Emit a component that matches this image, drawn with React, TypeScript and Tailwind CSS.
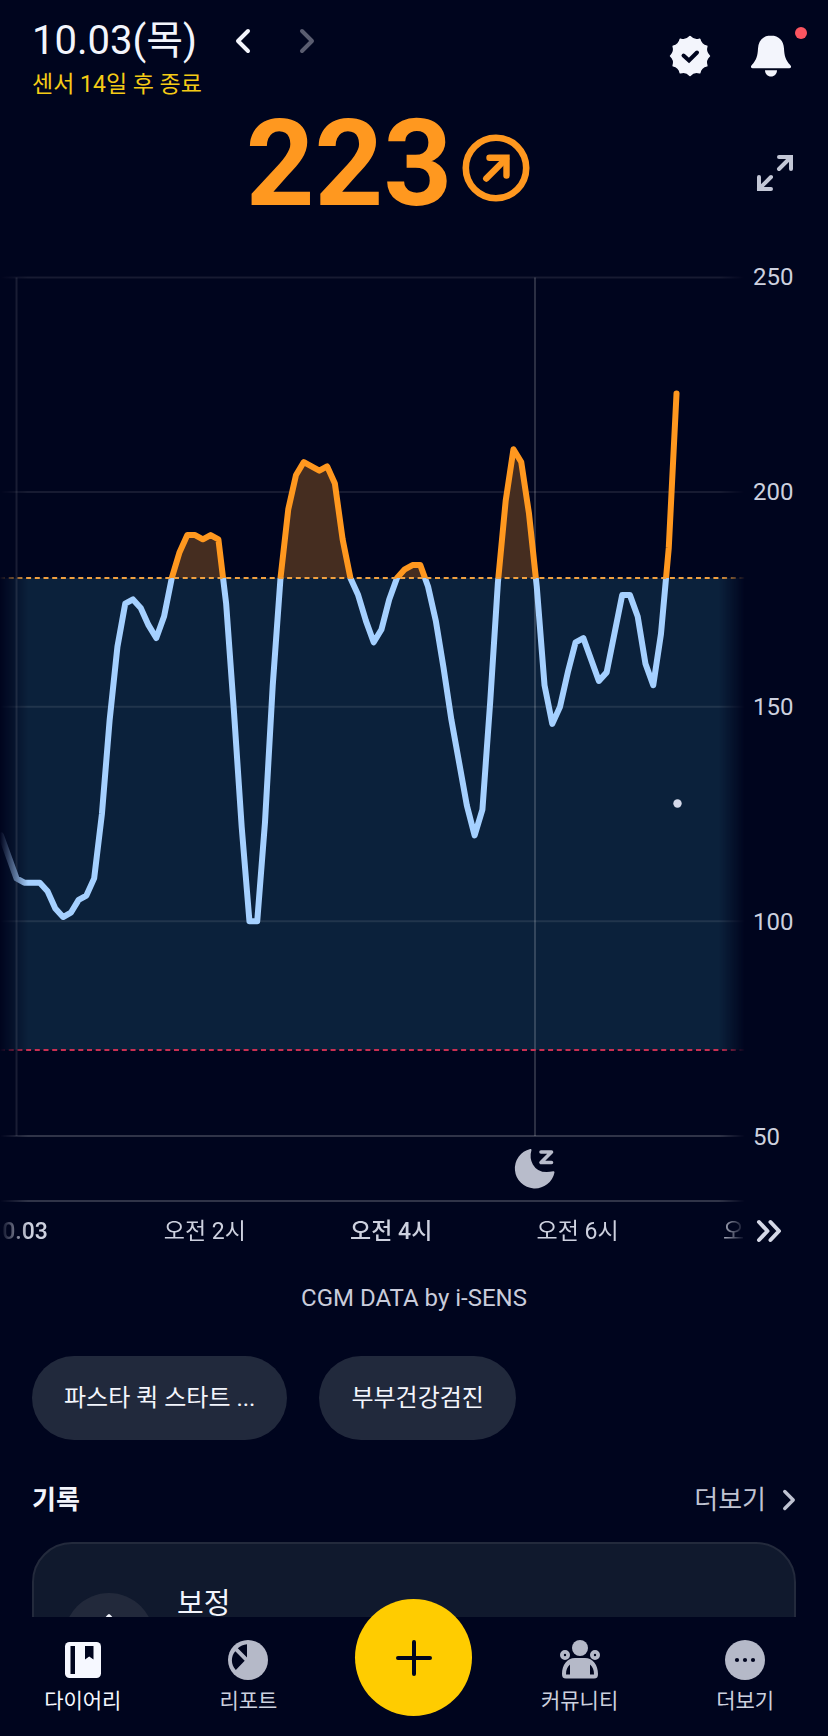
import type { ReactNode } from 'react'
import { clsx } from 'clsx'

// One reading every five minutes, starting at midnight
const READINGS = [
  110, 109, 109, 109, 107, 103, 101, 102, 105, 106, 110, 125, 147, 164, 174, 175, 173, 169, 166, 171, 180, 186, 190,
  190, 189, 190, 189, 174, 149, 122, 100, 100, 123, 155, 180, 196, 204, 207, 206, 205, 206, 202, 189, 180, 176, 170,
  165, 168, 175, 180, 182, 183, 183, 178, 170, 159, 147, 137, 127, 120, 126, 151, 179, 198, 210, 207, 195, 178, 155,
  146, 150, 158, 165, 166, 161, 156, 158, 167, 176, 176, 171, 160, 155, 167, 187, 223,
]

const PLOT_WIDTH = 745
const MIDNIGHT_X = 16.5
const STEP = 7.765
const HIGH = 180
const LOW = 70
const SLEEP_X = 535
const TICKS = [250, 200, 150, 100, 50]

const HOURS = [
  { label: '10.03', hour: 0, strong: true },
  { label: '오전 2시', hour: 2, strong: false },
  { label: '오전 4시', hour: 4, strong: true },
  { label: '오전 6시', hour: 6, strong: false },
  { label: '오전 8시', hour: 8, strong: false },
]

const toX = (index: number) => MIDNIGHT_X + index * STEP
const toY = (value: number) => 10.5 + (250 - value) * 4.292

const linePoints = [`1,${toY(120)}`, ...READINGS.map((v, i) => `${toX(i)},${toY(v)}`)].join(' ')

// The last climb is still open, so only the closed peaks are filled
const closedReadings = READINGS.slice(0, 68)
const areaPoints = [
  `${toX(0)},${toY(50)}`,
  ...closedReadings.map((v, i) => `${toX(i)},${toY(v)}`),
  `${toX(closedReadings.length - 1)},${toY(50)}`,
].join(' ')

const EDGE_FADE = '[mask-image:linear-gradient(to_right,transparent,black_28px,black_calc(100%-26px),transparent)]'

function sealPath() {
  const point = (r: number, deg: number) => {
    const a = (deg * Math.PI) / 180
    return `${(21 + r * Math.sin(a)).toFixed(2)} ${(21 - r * Math.cos(a)).toFixed(2)}`
  }
  let d = `M${point(19.4, 0)}`
  for (let i = 0; i < 12; i++) {
    d += `Q${point(15.4, i * 30 + 15)} ${point(19.4, (i + 1) * 30)}`
  }
  return d + 'Z'
}

function Chevron({ direction, className = 'h-[26px] w-4' }: { direction: 'left' | 'right'; className?: string }) {
  return (
    <svg viewBox="0 0 16 26" className={className} fill="none" stroke="currentColor" strokeWidth="4" strokeLinecap="round" strokeLinejoin="round">
      <path d={direction === 'left' ? 'M13 3 3 13l10 10' : 'M3 3l10 10L3 23'} />
    </svg>
  )
}

function Header() {
  return (
    <header className="flex items-start justify-between pt-[21px] pr-9 pl-8">
      <div>
        <div className="flex items-center">
          <h1 className="text-[40px] leading-10">10.03(목)</h1>
          <button type="button" aria-label="이전 날짜" className="ml-[38px]">
            <Chevron direction="left" />
          </button>
          <button type="button" aria-label="다음 날짜" disabled className="ml-12 text-[#5a5d70]">
            <Chevron direction="right" />
          </button>
        </div>
        <p className="mt-2.5 text-[23px] leading-7 text-[#f5cb16]">센서 14일 후 종료</p>
      </div>

      <div className="flex items-center gap-[39px] pt-3.5 text-[#f3f5fc]">
        <button type="button" aria-label="인증">
          <svg viewBox="0 0 42 42" className="size-[42px]">
            <path d={sealPath()} fill="currentColor" stroke="currentColor" strokeWidth="1.6" strokeLinejoin="round" />
            <path d="m14.500 20.500 5.500 5 8-8" fill="none" stroke="#00051e" strokeWidth="4" strokeLinecap="round" strokeLinejoin="miter" />
          </svg>
        </button>
        <button type="button" aria-label="알림" className="relative">
          <svg viewBox="0 0 42 42" className="size-[42px]" fill="currentColor">
            <path d="M21 0.500c-8 0-12.700 5.500-13 13-.3 7-1.500 11.500-6.200 16.500-1.600 1.700-.9 3.300.8 3.300h36.800c1.700 0 2.400-1.600.8-3.300-4.700-5-5.900-9.500-6.200-16.500-.3-7.500-5-13-13-13Z" />
            <path d="M15 35.200h12c0 3.500-2.600 6.300-6 6.300s-6-2.800-6-6.300Z" />
          </svg>
          <span className="absolute -top-2 -right-[15px] size-3 rounded-full bg-[#fb5560]" />
        </button>
      </div>
    </header>
  )
}

function CurrentGlucose() {
  return (
    <section className="mt-[5px] flex items-center pr-[34px] pl-5">
      <div className="flex flex-1 items-center justify-center gap-2.5 text-[#ff981f]">
        <span className="text-[120px] leading-none font-bold">223</span>
        <svg viewBox="0 0 68 68" className="mt-2 size-[68px]" fill="none" stroke="currentColor" strokeLinecap="round" strokeLinejoin="round">
          <circle cx="34" cy="34" r="30.200" strokeWidth="6.600" />
          <path d="M24.300 44.500 44 24.800" strokeWidth="6.400" />
          <path d="M27.500 23.800H44.500V41.500" strokeWidth="6.400" strokeLinejoin="miter" />
        </svg>
      </div>
      <button type="button" aria-label="전체 화면" className="mt-[18px] text-[#c3c7d6]">
        <svg viewBox="0 0 38 38" className="size-[38px]" fill="none" stroke="currentColor" strokeWidth="4" strokeLinecap="round">
          <path d="M23 3h12v12M35 3 23 15M3 23v12h12M3 35l12-12" />
        </svg>
      </button>
    </section>
  )
}

function GlucosePlot() {
  return (
    <svg viewBox={`0 0 ${PLOT_WIDTH} 880`} className={clsx('min-w-0 flex-1', EDGE_FADE)} role="img" aria-label="혈당 그래프">
      <defs>
        <clipPath id="above">
          <rect x="0" y="0" width={PLOT_WIDTH} height={toY(HIGH)} />
        </clipPath>
        <clipPath id="below">
          <rect x="0" y={toY(HIGH)} width={PLOT_WIDTH} height="600" />
        </clipPath>
      </defs>

      <rect x="0" y={toY(HIGH)} width={PLOT_WIDTH} height={toY(LOW) - toY(HIGH)} fill="#0b213b" />
      {TICKS.map((tick) => (
        <line key={tick} x1="0" x2={PLOT_WIDTH} y1={toY(tick)} y2={toY(tick)} stroke="#fff" strokeOpacity={tick === 50 ? 0.19 : 0.09} strokeWidth="2" />
      ))}
      <polygon points={areaPoints} fill="#452d20" clipPath="url(#above)" />
      {[MIDNIGHT_X, SLEEP_X].map((x) => (
        <line key={x} x1={x} x2={x} y1={toY(250)} y2={toY(50)} stroke="#fff" strokeOpacity="0.17" strokeWidth="2" />
      ))}
      <g fill="none" strokeWidth="6" strokeLinecap="round" strokeLinejoin="round">
        <polyline points={linePoints} stroke="#a5d0ff" clipPath="url(#below)" />
        <polyline points={linePoints} stroke="#ff981f" clipPath="url(#above)" />
      </g>
      <line x1="0" x2={PLOT_WIDTH} y1={toY(HIGH)} y2={toY(HIGH)} stroke="#f0a040" strokeWidth="2" strokeDasharray="5 3.700" />
      <line x1="0" x2={PLOT_WIDTH} y1={toY(LOW)} y2={toY(LOW)} stroke="#c92f52" strokeWidth="2" strokeDasharray="5 3.700" />
      <circle cx="677.500" cy="536.500" r="4.200" fill="#d5daea" />
    </svg>
  )
}

function TimeAxis() {
  return (
    <svg viewBox={`0 0 ${PLOT_WIDTH} 120`} className={clsx('min-w-0 flex-1', EDGE_FADE)}>
      <g fill="#b8bccb" stroke="#b8bccb" strokeLinejoin="round" strokeLinecap="round">
        <path d="M530.500 3a19 19 0 1 0 23 22.300c-10 2.200-17.500-.3-21.500-7.300-2.500-4.500-3-10-1.500-15Z" strokeWidth="2" />
        <path d="M541 5h10.500l-10.500 10.500h10.500" fill="none" strokeWidth="3.600" />
      </g>
      <line x1="0" x2={PLOT_WIDTH} y1="54" y2="54" stroke="#fff" strokeOpacity="0.19" strokeWidth="2" />
      {HOURS.map(({ label, hour, strong }) => (
        <text key={label} x={toX(hour * 12) + 2} y="92" textAnchor="middle" fontSize="23" fill="#cdd1df" fontWeight={strong ? 500 : 400}>
          {label}
        </text>
      ))}
    </svg>
  )
}

function GlucoseChart() {
  return (
    <section className="mt-[43px]">
      <div className="flex">
        <GlucosePlot />
        <ul className="flex w-[83px] flex-col justify-between pl-2 text-2xl leading-5 text-[#cdd1df]">
          {TICKS.map((tick) => (
            <li key={tick}>{tick}</li>
          ))}
        </ul>
      </div>
      <div className="flex">
        <TimeAxis />
        <div className="flex w-[83px] items-end pb-6 pl-2.5">
          <button type="button" aria-label="최신 기록으로 이동" className="text-[#d5d8e6]">
            <svg viewBox="0 0 28 24" className="h-6 w-7" fill="none" stroke="currentColor" strokeWidth="4" strokeLinecap="round" strokeLinejoin="round">
              <path d="m4 3 8.500 9L4 21M15.500 3l8.500 9-8.500 9" />
            </svg>
          </button>
        </div>
      </div>
      <p className="mt-4 text-center text-2xl leading-[30px] text-[#c9ccdb]">CGM DATA by i-SENS</p>
    </section>
  )
}

function QuickLinks() {
  return (
    <div className="mt-[43px] flex gap-8 px-8">
      {['파스타 퀵 스타트 ...', '부부건강검진'].map((label) => (
        <button key={label} type="button" className="h-[84px] rounded-full bg-[#21293c] px-8 text-2xl">
          {label}
        </button>
      ))}
    </div>
  )
}

function Records() {
  return (
    <section className="mt-[42px] px-8">
      <div className="flex items-center justify-between leading-9">
        <h2 className="text-[26px] font-bold">기록</h2>
        <a href="#records" className="flex items-center gap-4 text-[26px] text-[#bfc3d2]">
          더보기
          <Chevron direction="right" className="h-[22px] w-3.5" />
        </a>
      </div>
      <article className="mt-6 flex h-[200px] gap-[23px] rounded-[40px] border-2 border-[#232a3c] bg-[#10192d] px-[30px] pt-[42px]">
        <div className="mt-[7px] flex size-[90px] items-center justify-center rounded-full bg-[#22293b]">
          <svg viewBox="0 0 40 50" className="h-[50px] w-10" fill="#f3f5fc">
            <path d="M20 1c2 0 15 17 15 29a15 15 0 0 1-30 0C5 18 18 1 20 1Z" />
          </svg>
        </div>
        <h3 className="text-[29px] leading-9">보정</h3>
      </article>
    </section>
  )
}

interface NavItemProps {
  label: string
  active?: boolean
  children: ReactNode
}

function NavItem({ label, active = false, children }: NavItemProps) {
  return (
    <a href="#" className={clsx('flex flex-col items-center gap-[9px] pt-[23px]', active ? 'text-[#f6f8ff]' : 'text-[#b5b9c8]')}>
      <svg viewBox="0 0 40 40" className="size-10" fill="currentColor">
        {children}
      </svg>
      <span className={clsx('text-[21px] leading-6', !active && 'text-[#cdd1df]')}>{label}</span>
    </a>
  )
}

function BottomNav() {
  return (
    <nav className="relative grid h-[119px] shrink-0 grid-cols-5 bg-[#00051e]">
      <NavItem label="다이어리" active>
        <rect x="2" y="2" width="36" height="36" rx="4.500" />
        <path d="M7.500 6h4.500v28H7.500zM22 6h8.500v13.500L26.200 16.500 22 19.500z" fill="#00051e" />
      </NavItem>
      <NavItem label="리포트">
        <circle cx="20" cy="20" r="20" />
        <path d="M19 4.200V17.500L9.800 8.200C12.300 5.900 15.400 4.500 19 4.200ZM7.300 11.200 16.700 20.700 7.800 30C2.700 24.200 2.700 16.500 7.300 11.200Z" fill="#00051e" />
      </NavItem>
      <div className="flex justify-center">
        <button type="button" aria-label="기록 추가" className="-mt-[18px] flex size-[117px] items-center justify-center rounded-full bg-[#ffcc00] text-[#00051e]">
          <svg viewBox="0 0 40 40" className="size-10" fill="none" stroke="currentColor" strokeWidth="4" strokeLinecap="round">
            <path d="M20 4v32M4 20h32" />
          </svg>
        </button>
      </div>
      <NavItem label="커뮤니티">
        <circle cx="20" cy="8" r="8" />
        <path fillRule="evenodd" d="M5 10a5 5 0 1 1 0 10 5 5 0 0 1 0-10Zm0 3.800a1.200 1.200 0 1 0 0 2.400 1.200 1.200 0 0 0 0-2.400ZM35 10a5 5 0 1 1 0 10 5 5 0 0 1 0-10Zm0 3.800a1.200 1.200 0 1 0 0 2.400 1.200 1.200 0 0 0 0-2.400Z" />
        <path fillRule="evenodd" d="M15 18h10c8 0 13 7 13 16 0 3-1 4.500-4 4.500H6c-3 0-4-1.500-4-4.500C2 25 7 18 15 18ZM10 24.500c-2.800 2.300-4 5.500-4 10h4ZM30 24.500v10h4c0-4.500-1.200-7.700-4-10Z" />
      </NavItem>
      <NavItem label="더보기">
        <circle cx="20" cy="20" r="20" />
        <g fill="#00051e">
          <circle cx="12" cy="20" r="2.100" />
          <circle cx="20" cy="20" r="2.100" />
          <circle cx="28" cy="20" r="2.100" />
        </g>
      </NavItem>
    </nav>
  )
}

export default function App() {
  return (
    <div className="flex h-screen flex-col bg-[#00051e] font-[Roboto,'Noto_Sans_CJK_KR',sans-serif] text-[#f3f5fc]">
      <main className="min-h-0 flex-1 overflow-y-auto [scrollbar-width:none]">
        <Header />
        <CurrentGlucose />
        <GlucoseChart />
        <QuickLinks />
        <Records />
      </main>
      <BottomNav />
    </div>
  )
}
